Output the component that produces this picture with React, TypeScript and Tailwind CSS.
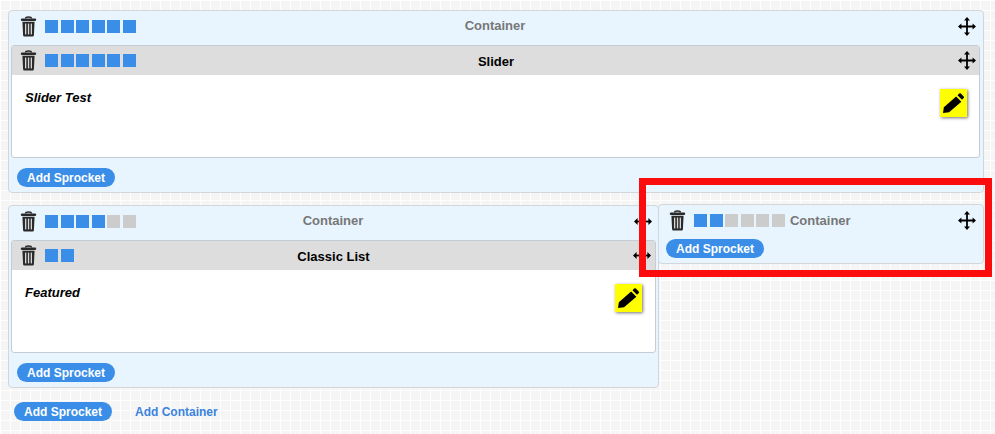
import React from "react";

const Trash = () => (
  <svg width="17" height="21" viewBox="0 0 17 21" className="shrink-0">
    <path d="M5.500 2.400 C5.500 .5 11.500 .5 11.500 2.400" fill="none" stroke="#2a2a2a" strokeWidth="1.300" />
    <rect x=".8" y="2.400" width="15.400" height="2.600" rx="1.200" fill="#2a2a2a" />
    <path d="M2.400 5.800h12.200l-.7 13.500c0 .8-.7 1.200-1.400 1.200H4.500c-.7 0-1.400-.4-1.400-1.200z" fill="#2a2a2a" />
    <rect x="5" y="7.600" width="1.300" height="10.800" fill="#d8d8d8" />
    <rect x="7.900" y="7.600" width="1.300" height="10.800" fill="#d8d8d8" />
    <rect x="10.700" y="7.600" width="1.300" height="10.800" fill="#d8d8d8" />
  </svg>
);

const Move = () => (
  <svg width="18" height="19" viewBox="0 0 18 19" className="shrink-0">
    <path d="M9 2v15M1.500 9.500h15" stroke="#000" strokeWidth="1.800" />
    <path d="M9 0l3 3.400H6zM9 19l-3-3.400h6zM0 9.500l3.400-3v6zM18 9.500l-3.400 3v-6z" fill="#000" />
  </svg>
);

const Horiz = () => (
  <svg width="18" height="9" viewBox="0 0 18 9" className="shrink-0">
    <path d="M2 4.500h14" stroke="#000" strokeWidth="1.800" />
    <path d="M0 4.500l3.600-3.600v7.200zM18 4.500l-3.600 3.600V.9z" fill="#000" />
  </svg>
);

const Pencil = () => (
  <div className="flex h-[28px] w-[27px] items-center justify-center bg-[#ffff00] shadow-[1px_1px_3px_rgba(0,0,0,0.55)]">
    <svg width="21" height="20" viewBox="0 0 20 19">
      <path d="M0 19l.8-5.500L12.500 3.200l5 5.200L5.800 18.200zM13.800 2l1.700-1.500c.5-.4 1.100-.4 1.500 0l2.700 2.800c.4.400.4 1 0 1.400l-1.600 1.600z" fill="#000" />
    </svg>
  </div>
);

const Squares = ({ on, total = 6 }: { on: number; total?: number }) => (
  <div className="flex gap-[2.600px]">
    {Array.from({ length: total }).map((_, i) => (
      <span key={i} className={i < on ? "h-[13px] w-[13px] bg-[#3a8ee8]" : "h-[13px] w-[13px] bg-[#cccccc]"} />
    ))}
  </div>
);

const AddBtn = () => (
  <button className="flex h-[19px] w-[98px] items-center justify-center rounded-full bg-[#3a8ee8] text-[12px] font-bold text-white">
    Add Sprocket
  </button>
);

const Sprocket = ({ title, on, total, label, horiz }: { title: string; on: number; total?: number; label: string; horiz?: boolean }) => (
  <div className="rounded-[3px] border border-[#c6ccd4] bg-white">
    <div className={horiz ? "grid h-[29px] grid-cols-[1fr_auto_1fr] items-center bg-[#dddddd] pl-[8px] pr-[4px]" : "grid h-[29px] grid-cols-[1fr_auto_1fr] items-center bg-[#dddddd] pl-[8px] pr-[3px]"}>
      <div className="flex items-center">
        <Trash />
        <div className="ml-[8px]">
          <Squares on={on} total={total} />
        </div>
      </div>
      <div className="pr-[4px] pt-[2px] text-center text-[13px] font-bold text-black">{title}</div>
      <div className="flex justify-end">{horiz ? <Horiz /> : <Move />}</div>
    </div>
    <div className={horiz ? "flex h-[82px] justify-between pl-[13px] pr-[13px] pt-[15px]" : "flex h-[82px] justify-between pl-[13px] pr-[12px] pt-[15px]"}>
      <span className="text-[13px] font-bold italic leading-[16px] text-black">{label}</span>
      <div className="-mt-px">
        <Pencil />
      </div>
    </div>
  </div>
);

const Head = ({ on, horiz }: { on: number; horiz?: boolean }) => (
  <div className="grid h-[34px] grid-cols-[1fr_auto_1fr] items-center pb-[4px] pl-[9px] pr-[4px]">
    <div className="flex items-center">
      <Trash />
      <div className="ml-[8px]">
        <Squares on={on} />
      </div>
    </div>
    <div className="pr-[6px] text-center text-[13px] font-bold text-[#777777]">Container</div>
    <div className="flex justify-end">{horiz ? <Horiz /> : <Move />}</div>
  </div>
);

export default function App() {
  return (
    <div className="relative h-[434px] w-[995px] overflow-hidden bg-[#f5f5f5] bg-[linear-gradient(#fefefe_1px,transparent_1px),linear-gradient(90deg,#fefefe_1px,transparent_1px)] bg-[size:10px_10px] px-[8px] pt-[10px] font-['Liberation_Sans',Arial,sans-serif]">
      <div className="w-[976px] rounded-[4px] border border-[#d2d7dc] bg-[#e8f5ff] pb-[5px] pl-[2px] pr-[3px]">
        <Head on={6} />
        <Sprocket title="Slider" on={6} label="Slider Test" />
        <div className="flex pl-[6px] pt-[10px]">
          <AddBtn />
        </div>
      </div>

      <div className="mt-[12px] flex items-start">
        <div className="w-[651px] rounded-[4px] border border-[#d2d7dc] bg-[#e8f5ff] px-[2px] pb-[5px]">
          <Head on={4} horiz />
          <Sprocket title="Classic List" on={2} total={2} label="Featured" horiz />
          <div className="flex pl-[6px] pt-[10px]">
            <AddBtn />
          </div>
        </div>

        <div className="-mt-px ml-[-1px] w-[326px] rounded-[4px] border border-[#d2d7dc] bg-[#e8f5ff] pb-[5px] pl-[7px]">
          <div className="flex h-[34px] items-center pb-[3px] pl-[3px] pr-[7px]">
            <Trash />
            <div className="ml-[8px]">
              <Squares on={2} />
            </div>
            <div className="ml-[5px] text-[13px] font-bold text-[#777777]">Container</div>
            <div className="ml-auto flex justify-end">
              <Move />
            </div>
          </div>
          <AddBtn />
        </div>
      </div>

      <div className="mt-[14px] flex items-center pl-[6px]">
        <AddBtn />
        <span className="ml-[23px] text-[12px] font-bold text-[#3a83e0]">Add Container</span>
      </div>

      <div className="pointer-events-none absolute left-[639px] top-[178px] h-[99px] w-[353px] border-[7px] border-[#fb0d0d]" />
    </div>
  );
}
